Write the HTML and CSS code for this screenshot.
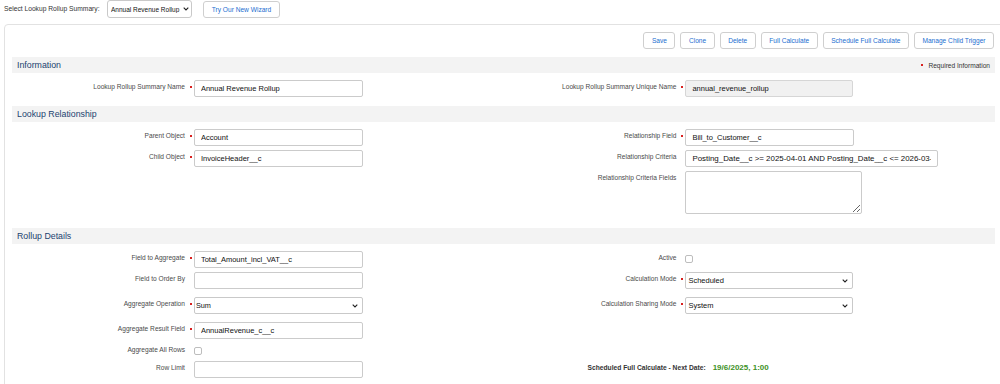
FILE: index.html
```html
<!DOCTYPE html>
<html lang="en">
<head>
    <meta charset="UTF-8">
    <meta name="viewport" content="width=device-width, initial-scale=1.0">
    <title>Manage Lookup Rollup Summaries</title>
    <link rel="stylesheet" href="styles.css">
</head>
<body>

<!-- Picker bar -->
<div class="topbar">
    <label class="picker-label" for="rollupPicker">Select Lookup Rollup Summary:</label>
    <span class="select-wrap picker">
        <select id="rollupPicker"><option>Annual Revenue Rollup</option></select>
        <svg class="chev" width="6" height="4" viewBox="0 0 6 4"><path d="M0.7 0.7 L3 3 L5.3 0.7" fill="none" stroke="#222" stroke-width="1.1"/></svg>
    </span>
    <button class="btn wizard">Try Our New Wizard</button>
</div>

<div class="panel">
    <div class="actions">
        <button class="btn">Save</button>
        <button class="btn">Clone</button>
        <button class="btn">Delete</button>
        <button class="btn">Full Calculate</button>
        <button class="btn">Schedule Full Calculate</button>
        <button class="btn">Manage Child Trigger</button>
    </div>

    <!-- Information -->
    <div class="section-head">
        <h3>Information</h3>
        <span class="req-legend"><span class="req-dot"></span>Required Information</span>
    </div>
    <div class="fields">
        <div class="lbl">Lookup Rollup Summary Name</div>
        <div class="val"><span class="mark on"></span><input class="field" type="text" value="Annual Revenue Rollup"></div>
        <div class="lbl">Lookup Rollup Summary Unique Name</div>
        <div class="val"><span class="mark on"></span><input class="field locked" type="text" value="annual_revenue_rollup" disabled></div>
    </div>

    <!-- Lookup Relationship -->
    <div class="section-head"><h3>Lookup Relationship</h3></div>
    <div class="fields rel">
        <div class="lbl">Parent Object</div>
        <div class="val"><span class="mark on"></span><input class="field" type="text" value="Account"></div>
        <div class="lbl">Relationship Field</div>
        <div class="val"><span class="mark on"></span><input class="field" type="text" value="Bill_to_Customer__c"></div>

        <div class="lbl">Child Object</div>
        <div class="val"><span class="mark on"></span><input class="field" type="text" value="InvoiceHeader__c"></div>
        <div class="lbl">Relationship Criteria</div>
        <div class="val"><span class="mark"></span><input class="field wide" type="text" value="Posting_Date__c >= 2025-04-01 AND Posting_Date__c <= 2026-03-31"></div>

        <div class="lbl"></div>
        <div class="val"></div>
        <div class="lbl">Relationship Criteria Fields</div>
        <div class="val"><span class="mark"></span><textarea class="field area"></textarea></div>
    </div>

    <!-- Rollup Details -->
    <div class="section-head"><h3>Rollup Details</h3></div>
    <div class="fields">
        <div class="lbl">Field to Aggregate</div>
        <div class="val"><span class="mark on"></span><input class="field" type="text" value="Total_Amount_incl_VAT__c"></div>
        <div class="lbl">Active</div>
        <div class="val"><span class="mark"></span><input class="check" type="checkbox"></div>

        <div class="lbl">Field to Order By</div>
        <div class="val spaced"><span class="mark"></span><input class="field" type="text" value=""></div>
        <div class="lbl">Calculation Mode</div>
        <div class="val"><span class="mark on"></span>
            <span class="select-wrap right">
                <select><option>Scheduled</option></select>
                <svg class="chev" width="6" height="4" viewBox="0 0 6 4"><path d="M0.7 0.7 L3 3 L5.3 0.7" fill="none" stroke="#222" stroke-width="1.1"/></svg>
            </span>
        </div>

        <div class="lbl">Aggregate Operation</div>
        <div class="val spaced"><span class="mark on"></span>
            <span class="select-wrap left">
                <select><option>Sum</option></select>
                <svg class="chev" width="6" height="4" viewBox="0 0 6 4"><path d="M0.7 0.7 L3 3 L5.3 0.7" fill="none" stroke="#222" stroke-width="1.1"/></svg>
            </span>
        </div>
        <div class="lbl">Calculation Sharing Mode</div>
        <div class="val"><span class="mark on"></span>
            <span class="select-wrap right">
                <select><option>System</option></select>
                <svg class="chev" width="6" height="4" viewBox="0 0 6 4"><path d="M0.7 0.7 L3 3 L5.3 0.7" fill="none" stroke="#222" stroke-width="1.1"/></svg>
            </span>
        </div>

        <div class="lbl">Aggregate Result Field</div>
        <div class="val"><span class="mark on"></span><input class="field" type="text" value="AnnualRevenue_c__c"></div>
        <div class="lbl"></div>
        <div class="val"></div>

        <div class="lbl">Aggregate All Rows</div>
        <div class="val"><span class="mark"></span><input class="check" type="checkbox"></div>
        <div class="lbl"></div>
        <div class="val"></div>

        <div class="lbl">Row Limit</div>
        <div class="val"><span class="mark"></span><input class="field" type="text" value=""></div>
        <div class="next-run">
            <span class="next-label">Scheduled Full Calculate - Next Date:</span>
            <span class="next-date">19/6/2025, 1:00</span>
        </div>
    </div>
</div>

</body>
</html>
```

FILE: styles.css
```css
html, body {
    margin: 0;
    overflow: hidden;
}
body {
    font-family: "Liberation Sans", Arial, sans-serif;
    color: #333;
    background: #fff;
    padding: 0 0 0 4px;
}
button, input, select, textarea {
    font-family: "Liberation Sans", Arial, sans-serif;
}

/* top picker bar */
.topbar {
    display: flex;
    align-items: flex-start;
    height: 18px;
}
.picker-label {
    font-size: 6.7px;
    color: #333;
    width: 103px;
    line-height: 18px;
}
.select-wrap {
    position: relative;
    display: inline-block;
}
.select-wrap select {
    appearance: none;
    -webkit-appearance: none;
    display: block;
    box-sizing: border-box;
    background: #fff;
    border: 1px solid #c9c9c9;
    border-radius: 2px;
    color: #111;
    margin: 0;
    outline: none;
}
.select-wrap .chev {
    position: absolute;
    top: 50%;
    margin-top: -2px;
    right: 5px;
    pointer-events: none;
}
.picker select {
    width: 85px;
    height: 18px;
    font-size: 6.5px;
    padding: 0 0 0 3px;
    border-radius: 3px;
}
.picker .chev {
    right: 3px;
}

.btn {
    box-sizing: border-box;
    height: 17px;
    padding: 0 7.5px;
    background: #fff;
    border: 1px solid #cfcfcf;
    border-radius: 3px;
    color: #1b6ed0;
    font-size: 6.6px;
    line-height: 15px;
    cursor: pointer;
}
.wizard {
    margin: 1px 0 0 11px;
    width: 77px;
    padding: 0;
}

/* main panel */
.panel {
    box-sizing: border-box;
    width: 1000px;
    margin-top: 6px;
    border: 1px solid #e2e2e2;
    border-radius: 4px;
    padding: 7px 8px 20px 7px;
    min-height: 400px;
}
.actions {
    display: flex;
    justify-content: flex-end;
    gap: 5px;
    margin: 0 1px 8px 0;
}

.section-head {
    display: flex;
    justify-content: space-between;
    align-items: center;
    height: 16px;
    padding: 0 5px;
    background: #f3f3f3;
}
.section-head h3 {
    margin: 0;
    font-size: 8.8px;
    font-weight: normal;
    color: #22436f;
}
.req-legend {
    display: flex;
    align-items: center;
    font-size: 6.6px;
    color: #333;
}
.req-dot {
    width: 2px;
    height: 2px;
    background: #d8201f;
    margin-right: 5px;
}

/* two column field grid: 18 / 32 / 18 / 32 */
.fields {
    display: grid;
    grid-template-columns: 18% 32% 18% 32%;
    padding: 5px 0 7px;
}
.fields.rel {
    padding-bottom: 10px;
}
.lbl {
    text-align: right;
    padding: 3.5px 4px 0 0;
    font-size: 6.6px;
    line-height: 9px;
    color: #4a4a4a;
}
.val {
    display: flex;
    align-items: flex-start;
    padding: 2px 0;
}
.val.spaced {
    padding-bottom: 6px;
}
.mark {
    flex: none;
    width: 5px;
}
.mark.on::before {
    content: '';
    display: block;
    width: 2px;
    height: 2px;
    margin: 6px 0 0 1px;
    background: #d8201f;
}

.field {
    box-sizing: border-box;
    width: 169px;
    height: 17px;
    margin: 0;
    padding: 0 6px;
    border: 1px solid #cbcbcb;
    border-radius: 2px;
    font-size: 7.5px;
    color: #111;
    background: #fff;
    outline: none;
}
.field.locked {
    width: 168px;
    background: #f1f1f1;
    border-color: #d6d6d6;
    color: #111;
}
.field.wide {
    width: 253px;
    font-size: 7.9px;
}
.field.area {
    width: 177px;
    height: 43px;
    padding: 3px;
    margin-bottom: 2px;
}

.left select {
    width: 169px;
    height: 17px;
    font-size: 7.3px;
    padding: 0 0 0 1px;
}
.right select {
    width: 168px;
    height: 17px;
    font-size: 7.5px;
    padding: 0 0 0 2px;
}

.check {
    appearance: none;
    -webkit-appearance: none;
    width: 8px;
    height: 8px;
    margin: 2px 0 2px 0;
    border: 1px solid #bdbdbd;
    border-radius: 2px;
    background: #fff;
}
.fields .val .check {
    margin-top: 4px;
}

.next-run {
    grid-column: 3 / 5;
    display: flex;
    align-items: baseline;
    gap: 7px;
    padding: 4px 0 0 84px;
}
.next-label {
    font-size: 6.7px;
    font-weight: bold;
    color: #333;
}
.next-date {
    font-size: 8px;
    font-weight: bold;
    color: #3d9126;
}
```
